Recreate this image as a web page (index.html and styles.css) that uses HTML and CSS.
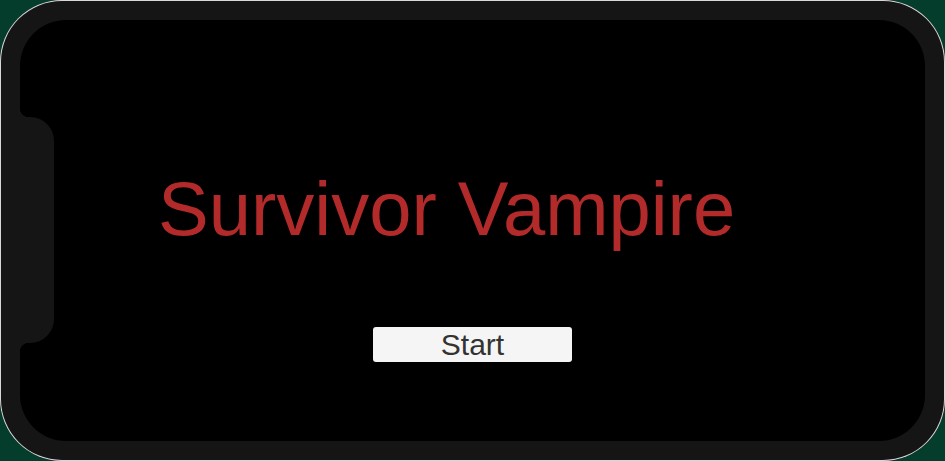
FILE: index.html
```html
<!DOCTYPE html>
<html>
<head>
<meta charset="utf-8">
<link rel="stylesheet" href="styles.css">
</head>
<body>
<div class="device">
  <div class="screen">
    <div class="notch"></div>
    <h1 class="title">Survivor Vampire</h1>
    <button class="start">Start</button>
  </div>
</div>
</body>
</html>
```
FILE: styles.css
```css
html, body {
  margin: 0;
  padding: 0;
  background: #043d2b;
}
.device {
  width: 945px;
  height: 461px;
  box-sizing: border-box;
  padding: 20px;
  background: #151515;
  border-radius: 62px;
  box-shadow: inset 0 0 0 1px #d8d8d8;
  display: flex;
}
.screen {
  flex: 1;
  background: #000;
  border-radius: 46px;
  position: relative;
  display: flex;
  flex-direction: column;
}
.notch {
  position: absolute;
  left: 0;
  top: 97px;
  width: 34px;
  height: 226px;
  background: #151515;
  border-radius: 0 24px 24px 0;
}
.notch::before,
.notch::after {
  content: "";
  position: absolute;
  left: 0;
  width: 9px;
  height: 9px;
}
.notch::before {
  top: -9px;
  background: radial-gradient(circle at 100% 0, transparent 9px, #151515 9.5px);
}
.notch::after {
  bottom: -9px;
  background: radial-gradient(circle at 100% 100%, transparent 9px, #151515 9.5px);
}
.title {
  margin: 151px 0 0 138px;
  font-family: "Liberation Sans", Arial, sans-serif;
  font-weight: normal;
  font-size: 76px;
  line-height: 76px;
  color: #b22a2a;
}
.start {
  align-self: center;
  margin-top: 80px;
  width: 199px;
  height: 35px;
  padding: 0;
  border: none;
  border-radius: 3px;
  background: #f5f5f5;
  color: #333;
  font-family: "Liberation Sans", Arial, sans-serif;
  font-size: 30px;
  line-height: 35px;
}
```
